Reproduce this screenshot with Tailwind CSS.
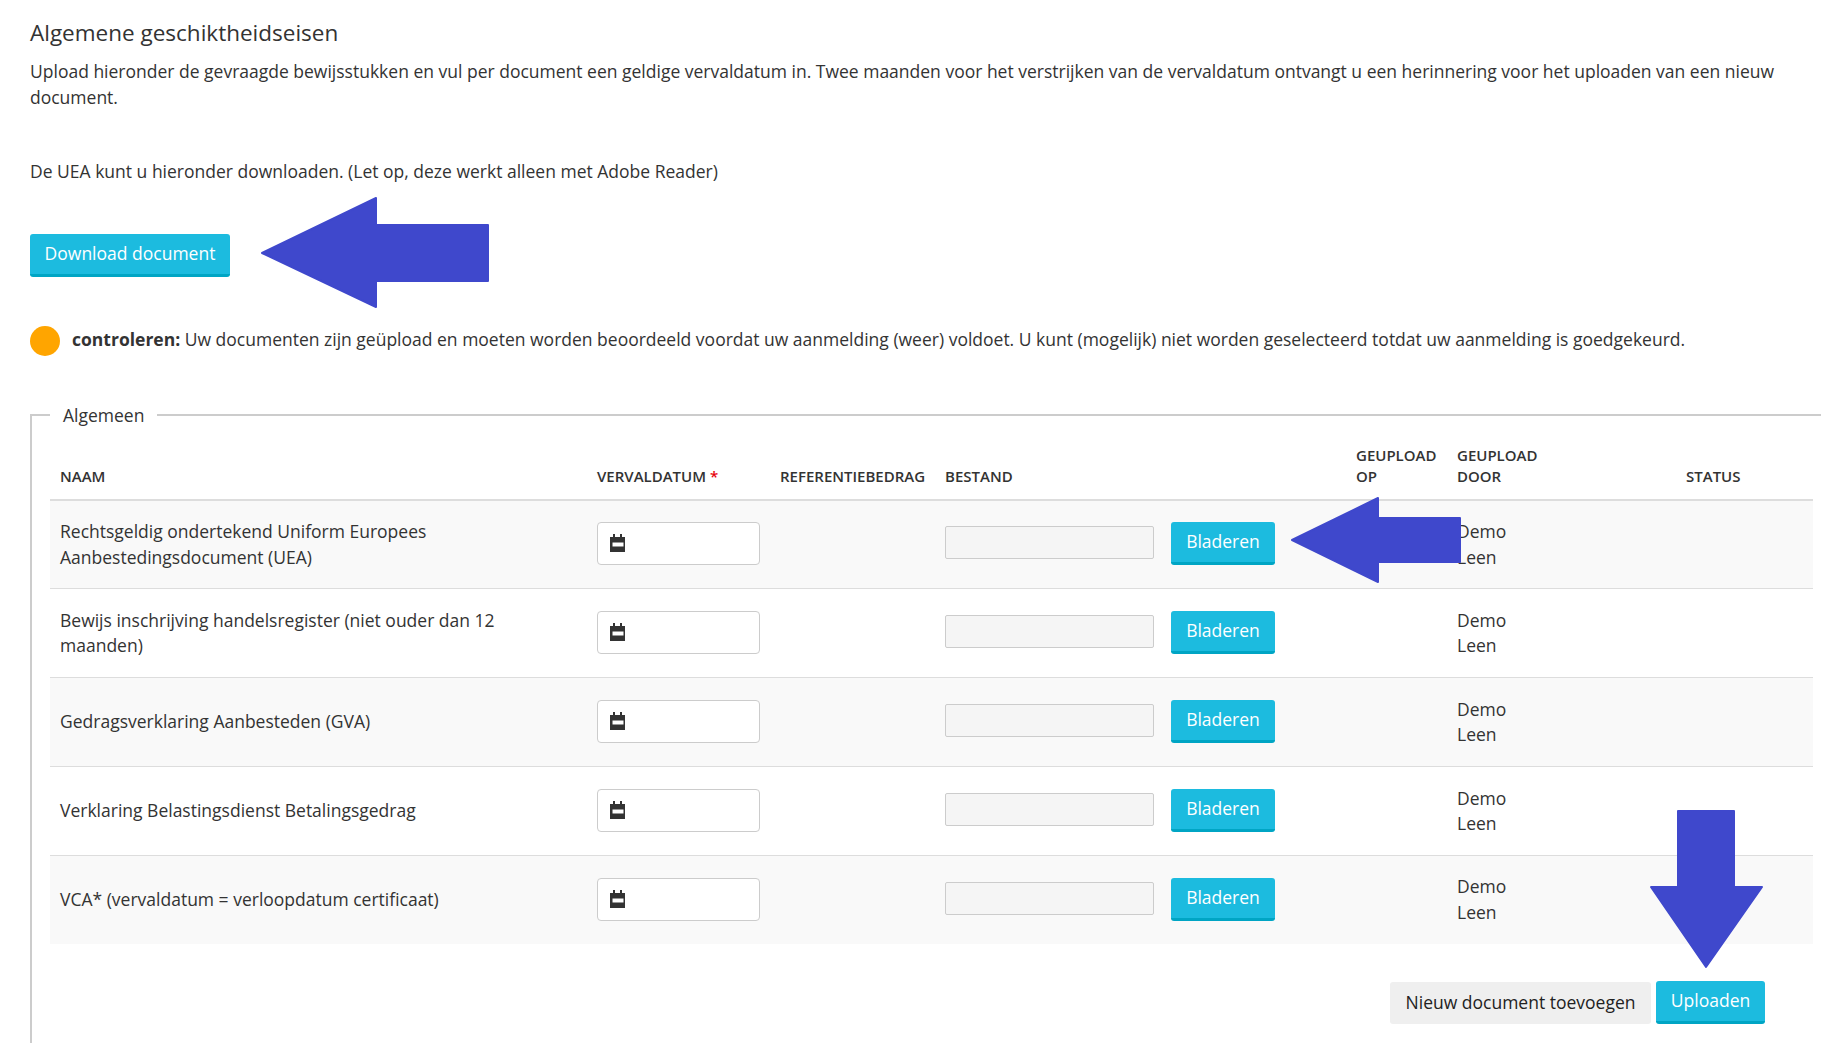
<!doctype html>
<html lang="nl">
<head>
<meta charset="utf-8">
<title>Algemene geschiktheidseisen</title>
<script src="https://cdn.jsdelivr.net/npm/@tailwindcss/browser@4"></script>
</head>
<body class="relative h-[1043px] overflow-hidden bg-white font-['Open_Sans',sans-serif] text-[17.5px] leading-[25.6px] text-[#333]">
<main class="pl-[30px]">
  <h2 class="pt-[18px] text-[22.5px] leading-[29px] font-normal">Algemene geschiktheidseisen</h2>
  <p class="mt-[12px] pr-[30px]">Upload hieronder de gevraagde bewijsstukken en vul per document een geldige vervaldatum in. Twee maanden voor het verstrijken van de vervaldatum ontvangt u een herinnering voor het uploaden van een nieuw document.</p>
  <p class="mt-[49px]">De UEA kunt u hieronder downloaden. (Let op, deze werkt alleen met Adobe Reader)</p>
  <button class="mt-[49px] block h-[43px] w-[200px] rounded-[3px] border-b-[3px] border-[#00a5c4] bg-[#1cbbdf] text-white">Download document</button>
  <div class="mt-[49px] flex items-center gap-[12px]">
    <span class="size-[30px] rounded-full bg-[#ffa500]"></span>
    <p class="-mt-[2px]"><strong class="font-bold">controleren:</strong> Uw documenten zijn geüpload en moeten worden beoordeeld voordat uw aanmelding (weer) voldoet. U kunt (mogelijk) niet worden geselecteerd totdat uw aanmelding is goedgekeurd.</p>
  </div>
  <fieldset class="mt-[48px] h-[640px] border-t-2 border-l-2 border-[#ccc] pl-[18px]">
    <legend class="px-[13px] leading-[22px]">Algemeen</legend>
    <table class="w-[1763px] table-fixed border-collapse">
      <thead>
        <tr class="h-[74px] border-b-2 border-[#ddd] text-left align-bottom text-[15px] leading-[21px] font-semibold">
          <th class="w-[547px] pb-[12px] pl-[10px] font-semibold">NAAM</th>
          <th class="w-[183px] pb-[12px] font-semibold">VERVALDATUM <span class="text-red-600">*</span></th>
          <th class="w-[165px] pb-[12px] font-semibold">REFERENTIEBEDRAG</th>
          <th class="w-[411px] pb-[12px] font-semibold">BESTAND</th>
          <th class="w-[101px] pb-[12px] font-semibold"><span class="block w-[85px]">GEUPLOAD OP</span></th>
          <th class="w-[229px] pb-[12px] font-semibold"><span class="block w-[90px]">GEUPLOAD DOOR</span></th>
          <th class="pb-[12px] font-semibold">STATUS</th>
        </tr>
      </thead>
      <tbody>
        <tr class="h-[89px] border-b border-[#ddd] bg-[#f9f9f9]">
          <td class="pl-[10px] pr-[60px]">Rechtsgeldig ondertekend Uniform Europees Aanbestedingsdocument (UEA)</td>
          <td class="pb-[2px]"><div class="flex h-[43px] w-[163px] items-center rounded-[4px] border border-[#ccc] bg-white pl-[11px]"><svg width="18" height="19" viewBox="0 0 18 19"><path fill="#333" d="M4 0h2v3h5V0h2v3h3v15H1V3h3z"/><path fill="#fff" d="M3.500 8.500h11v4h-11z"/></svg></div></td>
          <td></td>
          <td class="pb-[2px]"><div class="flex items-center gap-[17px]"><div class="-mt-[2px] h-[33px] w-[209px] rounded-[2px] border border-[#ccc] bg-[#f5f5f5]"></div><button class="h-[43px] w-[104px] rounded-[3px] border-b-[3px] border-[#00a5c4] bg-[#1cbbdf] text-white">Bladeren</button></div></td>
          <td></td>
          <td>Demo<br>Leen</td>
          <td></td>
        </tr>
        <tr class="h-[89px] border-b border-[#ddd] bg-white">
          <td class="pl-[10px] pr-[60px]">Bewijs inschrijving handelsregister (niet ouder dan 12 maanden)</td>
          <td class="pb-[2px]"><div class="flex h-[43px] w-[163px] items-center rounded-[4px] border border-[#ccc] bg-white pl-[11px]"><svg width="18" height="19" viewBox="0 0 18 19"><path fill="#333" d="M4 0h2v3h5V0h2v3h3v15H1V3h3z"/><path fill="#fff" d="M3.500 8.500h11v4h-11z"/></svg></div></td>
          <td></td>
          <td class="pb-[2px]"><div class="flex items-center gap-[17px]"><div class="-mt-[2px] h-[33px] w-[209px] rounded-[2px] border border-[#ccc] bg-[#f5f5f5]"></div><button class="h-[43px] w-[104px] rounded-[3px] border-b-[3px] border-[#00a5c4] bg-[#1cbbdf] text-white">Bladeren</button></div></td>
          <td></td>
          <td>Demo<br>Leen</td>
          <td></td>
        </tr>
        <tr class="h-[89px] border-b border-[#ddd] bg-[#f9f9f9]">
          <td class="pl-[10px] pr-[60px]">Gedragsverklaring Aanbesteden (GVA)</td>
          <td class="pb-[2px]"><div class="flex h-[43px] w-[163px] items-center rounded-[4px] border border-[#ccc] bg-white pl-[11px]"><svg width="18" height="19" viewBox="0 0 18 19"><path fill="#333" d="M4 0h2v3h5V0h2v3h3v15H1V3h3z"/><path fill="#fff" d="M3.500 8.500h11v4h-11z"/></svg></div></td>
          <td></td>
          <td class="pb-[2px]"><div class="flex items-center gap-[17px]"><div class="-mt-[2px] h-[33px] w-[209px] rounded-[2px] border border-[#ccc] bg-[#f5f5f5]"></div><button class="h-[43px] w-[104px] rounded-[3px] border-b-[3px] border-[#00a5c4] bg-[#1cbbdf] text-white">Bladeren</button></div></td>
          <td></td>
          <td>Demo<br>Leen</td>
          <td></td>
        </tr>
        <tr class="h-[89px] border-b border-[#ddd] bg-white">
          <td class="pl-[10px] pr-[60px]">Verklaring Belastingsdienst Betalingsgedrag</td>
          <td class="pb-[2px]"><div class="flex h-[43px] w-[163px] items-center rounded-[4px] border border-[#ccc] bg-white pl-[11px]"><svg width="18" height="19" viewBox="0 0 18 19"><path fill="#333" d="M4 0h2v3h5V0h2v3h3v15H1V3h3z"/><path fill="#fff" d="M3.500 8.500h11v4h-11z"/></svg></div></td>
          <td></td>
          <td class="pb-[2px]"><div class="flex items-center gap-[17px]"><div class="-mt-[2px] h-[33px] w-[209px] rounded-[2px] border border-[#ccc] bg-[#f5f5f5]"></div><button class="h-[43px] w-[104px] rounded-[3px] border-b-[3px] border-[#00a5c4] bg-[#1cbbdf] text-white">Bladeren</button></div></td>
          <td></td>
          <td>Demo<br>Leen</td>
          <td></td>
        </tr>
        <tr class="h-[88px] bg-[#f9f9f9]">
          <td class="pl-[10px] pr-[60px]">VCA* (vervaldatum = verloopdatum certificaat)</td>
          <td class="pb-[2px]"><div class="flex h-[43px] w-[163px] items-center rounded-[4px] border border-[#ccc] bg-white pl-[11px]"><svg width="18" height="19" viewBox="0 0 18 19"><path fill="#333" d="M4 0h2v3h5V0h2v3h3v15H1V3h3z"/><path fill="#fff" d="M3.500 8.500h11v4h-11z"/></svg></div></td>
          <td></td>
          <td class="pb-[2px]"><div class="flex items-center gap-[17px]"><div class="-mt-[2px] h-[33px] w-[209px] rounded-[2px] border border-[#ccc] bg-[#f5f5f5]"></div><button class="h-[43px] w-[104px] rounded-[3px] border-b-[3px] border-[#00a5c4] bg-[#1cbbdf] text-white">Bladeren</button></div></td>
          <td></td>
          <td>Demo<br>Leen</td>
          <td></td>
        </tr>
      </tbody>
    </table>
    <div class="mt-[37px] flex w-[1715px] items-end justify-end gap-[5px]">
      <button class="h-[42px] w-[261px] rounded-[3px] bg-[#efefef] text-[#222]">Nieuw document toevoegen</button>
      <button class="h-[43px] w-[109px] rounded-[3px] border-b-[3px] border-[#00a5c4] bg-[#1cbbdf] text-white">Uploaden</button>
    </div>
  </fieldset>
</main>
<svg class="absolute top-0 left-0" width="1821" height="1043" viewBox="0 0 1821 1043" aria-hidden="true">
  <g fill="#3f48cc" stroke="#3f48cc" stroke-width="2" stroke-linejoin="round">
    <path d="M262 253 376 198V225H488V281H376V307Z"/>
    <path d="M1292 540 1378 498V518H1460V562H1378V582Z"/>
    <path d="M1678 811H1734V887H1762L1706 967 1651 887H1678Z"/>
  </g>
</svg>
</body>
</html>
